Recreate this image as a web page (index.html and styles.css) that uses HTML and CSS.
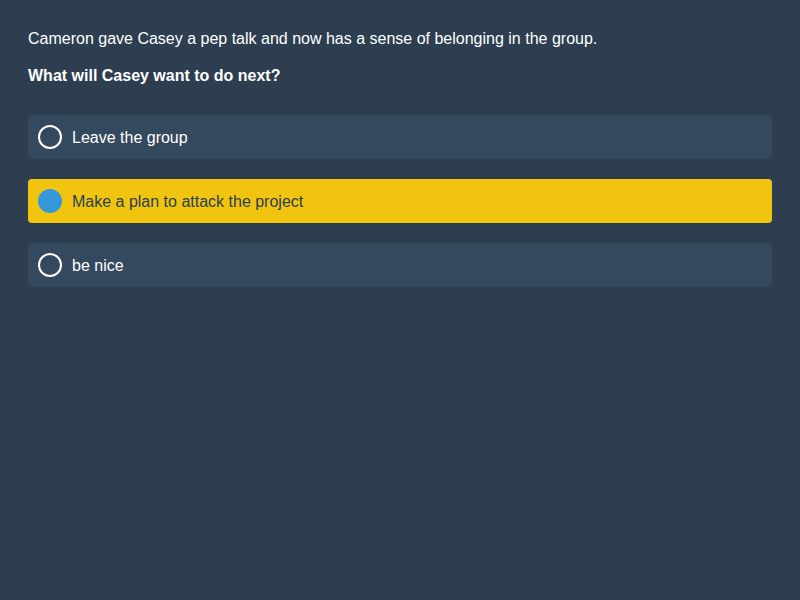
FILE: index.html
```html
<!DOCTYPE html>
<html>
<head>
<meta charset="utf-8">
<link rel="stylesheet" href="styles.css">
</head>
<body>
<div class="quiz">
  <p class="context">Cameron gave Casey a pep talk and now has a sense of belonging in the group.</p>
  <p class="question">What will Casey want to do next?</p>
  <div class="options">
    <div class="option"><span class="radio"></span><span class="label">Leave the group</span></div>
    <div class="option selected"><span class="radio"></span><span class="label">Make a plan to attack the project</span></div>
    <div class="option"><span class="radio"></span><span class="label">be nice</span></div>
  </div>
</div>
</body>
</html>
```
FILE: styles.css
```css
html, body {
  margin: 0;
  padding: 0;
  background: #2c3e50;
  height: 100%;
}
body {
  font-family: "Liberation Sans", Arial, sans-serif;
  font-size: 16px;
  color: #ffffff;
}
.quiz {
  padding: 29px 28px 28px;
}
.context {
  margin: 0;
  line-height: 20px;
}
.question {
  margin: 17px 0 0 0;
  line-height: 20px;
  font-weight: bold;
}
.options {
  margin-top: 29px;
  display: flex;
  flex-direction: column;
  gap: 20px;
}
.option {
  display: flex;
  align-items: center;
  gap: 10px;
  height: 44px;
  padding: 0 10px;
  background: #34495e;
  border-radius: 4px;
}
.label {
  padding-top: 2px;
}
.radio {
  width: 20px;
  height: 20px;
  border: 2px solid #ffffff;
  border-radius: 50%;
  flex: none;
}
.option.selected {
  background: #f1c40f;
  color: #2c3e50;
}
.option.selected .radio {
  background: #3498db;
  border-color: #3498db;
}
```
